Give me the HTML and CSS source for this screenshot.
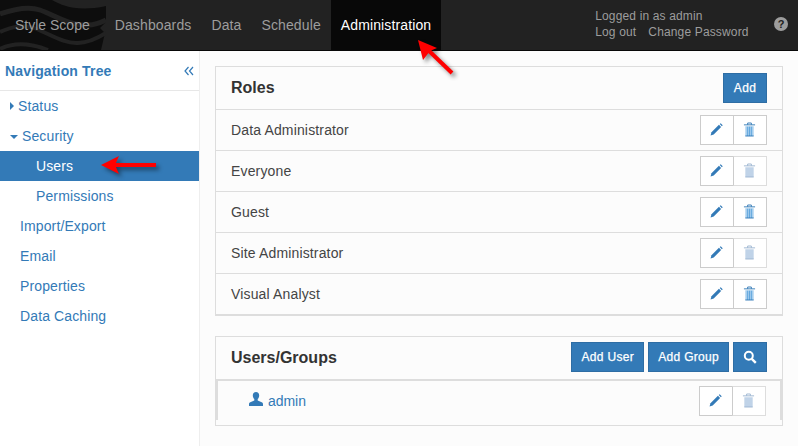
FILE: index.html
```html
<!DOCTYPE html>
<html lang="en">
<head>
    <meta charset="UTF-8">
    <title>Style Scope Administration</title>
    <link rel="stylesheet" href="styles.css">
</head>
<body>
    <svg width="0" height="0" class="defs">
        <symbol id="pencil" viewBox="0 0 14 14">
            <path d="M.6 13.400l1-3.400L9.600 2l2.400 2.400-8 8z" fill="#337ab7"/>
            <path d="M10.500 1.200l1-.9 2.200 2.200-.9 1z" fill="#337ab7"/>
        </symbol>
        <symbol id="trash" viewBox="0 0 14 16">
            <path d="M1 3h12M5 3V1h4v2" fill="none" stroke="#337ab7" stroke-width="1"/>
            <path d="M2.500 4.500h9V15h-9z" fill="#a8cfee"/>
            <path d="M5 5v10M7 5v10M9 5v10" stroke="#5da4dc" stroke-width="1"/>
            <path d="M2.500 15h9" stroke="#337ab7" stroke-width="1"/>
        </symbol>
        <symbol id="trash-off" viewBox="0 0 14 16">
            <path d="M1 3h12M5 3V1h4v2" fill="none" stroke="#9cb4d0" stroke-width="1"/>
            <path d="M2.500 4.500h9V15h-9z" fill="#c0d3e8"/>
            <path d="M2.500 15h9" stroke="#9cb4d0" stroke-width="1"/>
        </symbol>
    </svg>

    <header class="topbar">
        <svg class="swirl" viewBox="0 0 106 50" width="106" height="50">
            <path d="M0 0h106v22l-6 6 5 5-4 17H0z" fill="#0d0d0d"/>
            <path d="M0 14C14 9 28 6 40 10c14 5 30 16 48 15 6 0 12-2 18-5" fill="none" stroke="#222" stroke-width="5"/>
            <path d="M0 32c12-5 22-8 34-4 16 6 30 16 44 15 10 0 20-5 28-10" fill="none" stroke="#222" stroke-width="4"/>
            <path d="M0 49c14-7 30-6 48 1" fill="none" stroke="#222" stroke-width="4"/>
            <path d="M52 0c10 6 26 12 54 6V0z" fill="#222"/>
        </svg>
        <nav class="topnav">
            <a href="#" class="brand">Style Scope</a>
            <a href="#">Dashboards</a>
            <a href="#">Data</a>
            <a href="#">Schedule</a>
            <a href="#" class="active">Administration</a>
        </nav>
        <div class="account">
            <div>Logged in as admin</div>
            <div class="account-links"><a href="#">Log out</a><a href="#">Change Password</a></div>
        </div>
        <span class="help">?</span>
    </header>

    <div class="content">
        <aside class="sidebar">
            <div class="tree-title">
                <span>Navigation Tree</span>
                <svg width="10" height="10" viewBox="0 0 10 10"><path d="M4.500 1L1 5l3.500 4M9 1L5.500 5 9 9" fill="none" stroke="#337ab7" stroke-width="1.200"/></svg>
            </div>
            <ul class="tree">
                <li class="lvl1"><span class="caret-right"></span>Status</li>
                <li class="lvl1"><span class="caret-down"></span>Security</li>
                <li class="lvl2 selected">Users</li>
                <li class="lvl2">Permissions</li>
                <li class="lvl0">Import/Export</li>
                <li class="lvl0">Email</li>
                <li class="lvl0">Properties</li>
                <li class="lvl0">Data Caching</li>
            </ul>
        </aside>

        <main class="main">
            <section class="panel">
                <div class="panel-head">
                    <h2>Roles</h2>
                    <div class="actions"><button class="btn">Add</button></div>
                </div>
                <div class="row"><span>Data Administrator</span><div class="tools"><button><svg class="ic-pencil"><use href="#pencil"/></svg></button><button><svg class="ic-trash"><use href="#trash"/></svg></button></div></div>
                <div class="row"><span>Everyone</span><div class="tools"><button><svg class="ic-pencil"><use href="#pencil"/></svg></button><button class="off"><svg class="ic-trash"><use href="#trash-off"/></svg></button></div></div>
                <div class="row"><span>Guest</span><div class="tools"><button><svg class="ic-pencil"><use href="#pencil"/></svg></button><button><svg class="ic-trash"><use href="#trash"/></svg></button></div></div>
                <div class="row"><span>Site Administrator</span><div class="tools"><button><svg class="ic-pencil"><use href="#pencil"/></svg></button><button class="off"><svg class="ic-trash"><use href="#trash-off"/></svg></button></div></div>
                <div class="row"><span>Visual Analyst</span><div class="tools"><button><svg class="ic-pencil"><use href="#pencil"/></svg></button><button><svg class="ic-trash"><use href="#trash"/></svg></button></div></div>
            </section>

            <section class="panel users">
                <div class="panel-head">
                    <h2>Users/Groups</h2>
                    <div class="actions">
                        <button class="btn btn-user">Add User</button>
                        <button class="btn">Add Group</button>
                        <button class="btn btn-icon"><svg width="14" height="14" viewBox="0 0 14 14"><circle cx="5.800" cy="5.800" r="4" fill="none" stroke="#fff" stroke-width="2"/><path d="M8.800 8.800l4 4" stroke="#fff" stroke-width="2.400"/></svg></button>
                    </div>
                </div>
                <div class="user-row">
                    <a href="#" class="user-link">
                        <svg width="14" height="14" viewBox="0 0 14 14"><path d="M7 0c2 0 3.200 1.500 3.200 3.500 0 1.500-.7 2.800-1.500 3.600v1.300l4 1.800c.8.400 1.300 1 1.300 1.800V14H0v-2c0-.8.500-1.400 1.300-1.800l4-1.800V7.100C4.500 6.300 3.800 5 3.800 3.500 3.800 1.500 5 0 7 0z" fill="#337ab7"/></svg>
                        admin
                    </a>
                    <div class="tools"><button><svg class="ic-pencil"><use href="#pencil"/></svg></button><button class="off"><svg class="ic-trash"><use href="#trash-off"/></svg></button></div>
                </div>
            </section>
        </main>
    </div>

    <!-- annotation arrows drawn over the screenshot -->
    <svg class="arrow arrow-top" width="50" height="50" viewBox="0 0 50 50">
        <path d="M36 33L10 8" stroke="#f00" stroke-width="4"/>
        <path d="M2 0l19 8-7 3-7 9z" fill="#f00"/>
    </svg>
    <svg class="arrow arrow-side" width="64" height="28" viewBox="0 0 64 28">
        <path d="M14 11h41" stroke="#f00" stroke-width="4"/>
        <path d="M0 11L18 2l-4 9 4 9z" fill="#f00"/>
    </svg>
</body>
</html>
```

FILE: styles.css
```css
* {
    box-sizing: border-box;
}

body {
    margin: 0;
    height: 446px;
    overflow: hidden;
    font-family: "Liberation Sans", Arial, sans-serif;
    font-size: 14px;
    color: #444;
    background-color: #fcfcfc;
}

.defs {
    position: absolute;
}

a {
    text-decoration: none;
}

.topbar {
    position: relative;
    display: flex;
    height: 51px;
    background-color: #222;
    border-bottom: 1px solid #080808;
}

.swirl {
    position: absolute;
    left: 0;
    top: 0;
}

.topnav {
    position: relative;
    display: flex;
    padding-left: 5px;
    letter-spacing: .12px;
}

.topnav a {
    padding: 0 10px;
    line-height: 50px;
    color: #9d9d9d;
}

.topnav a.brand {
    padding-right: 15px;
    letter-spacing: 0;
}

.topnav a.active {
    color: #fff;
    background-color: #080808;
}

.account {
    position: relative;
    margin-left: 154px;
    padding-top: 8px;
    font-size: 12px;
    line-height: 16px;
    color: #9d9d9d;
    letter-spacing: .15px;
}

.account-links a {
    margin-right: 12px;
    color: #9d9d9d;
}

.help {
    width: 14px;
    height: 14px;
    margin: 17px 10px 0 auto;
    border-radius: 50%;
    background-color: #9d9d9d;
    color: #222;
    font-size: 11px;
    font-weight: bold;
    line-height: 14px;
    text-align: center;
}

.content {
    display: flex;
    height: 395px;
}

.sidebar {
    width: 200px;
    flex: none;
    background-color: #fff;
    border-right: 1px solid #eee;
}

.tree-title {
    display: flex;
    justify-content: space-between;
    align-items: center;
    height: 40px;
    padding: 0 5px;
    border-bottom: 1px solid #e7e7e7;
    color: #337ab7;
    font-weight: bold;
    letter-spacing: .15px;
}

.tree {
    list-style: none;
    margin: 0;
    padding: 0;
    letter-spacing: .12px;
}

.tree li {
    height: 30px;
    line-height: 30px;
    color: #337ab7;
}

.lvl0 {
    padding-left: 20px;
}

.lvl1 {
    padding-left: 10px;
}

.lvl2 {
    padding-left: 36px;
}

.tree li.selected {
    background-color: #337ab7;
    color: #fff;
}

.caret-right,
.caret-down {
    display: inline-block;
    width: 0;
    height: 0;
    vertical-align: 1px;
}

.caret-right {
    margin-right: 4px;
    border-left: 4px solid #337ab7;
    border-top: 4px solid transparent;
    border-bottom: 4px solid transparent;
}

.caret-down {
    margin-right: 4px;
    border-top: 4px solid #337ab7;
    border-left: 4px solid transparent;
    border-right: 4px solid transparent;
    vertical-align: 2px;
    width: 7px;
}

.main {
    flex: 1;
    padding: 15px 15px 0;
}

.panel {
    border: 1px solid #ddd;
}

.panel.users {
    margin-top: 20px;
    height: 90px;
}

.panel-head {
    display: flex;
    justify-content: space-between;
    align-items: center;
    height: 43px;
    padding: 0 15px;
    border-bottom: 1px solid #ddd;
}

.users .panel-head {
    height: 44px;
    border-bottom-width: 2px;
}

.users .actions {
    margin-bottom: 2px;
}

h2 {
    margin: 0;
    font-size: 16px;
    font-weight: bold;
    color: #333;
}

.actions {
    display: flex;
    gap: 4px;
}

.btn {
    min-width: 44px;
    height: 30px;
    padding: 0 9px;
    background-color: #337ab7;
    border: 1px solid #2e6da4;
    color: #fff;
    font-family: inherit;
    font-size: 12px;
    font-weight: normal;
    letter-spacing: .3px;
    -webkit-text-stroke: .25px #fff;
}

.btn-user {
    min-width: 73px;
}

.btn-icon {
    min-width: 34px;
    width: 34px;
    padding: 0;
    line-height: 0;
}

.row {
    display: flex;
    justify-content: space-between;
    align-items: center;
    height: 41px;
    padding: 0 15px;
    border-bottom: 1px solid #ddd;
    letter-spacing: .15px;
}

.tools {
    display: flex;
}

.tools button {
    display: flex;
    align-items: center;
    justify-content: center;
    width: 34px;
    height: 30px;
    margin-left: -1px;
    padding: 0 1px 1px 0;
    background-color: #fff;
    border: 1px solid #ccc;
}

.tools button.off {
    border-color: #ddd;
    border-left-color: #ccc;
}

.ic-pencil {
    width: 13px;
    height: 13px;
}

.ic-trash {
    width: 13px;
    height: 15px;
}

.user-row {
    display: flex;
    justify-content: space-between;
    align-items: center;
    height: 39px;
    padding: 0 14px 0 31px;
    border-left: 2px solid #ddd;
    border-right: 2px solid #ddd;
}

.user-link {
    color: #337ab7;
    word-spacing: 1px;
}

.arrow {
    position: absolute;
    filter: drop-shadow(3px 3px 2px rgba(0, 0, 0, .45));
}

.arrow-top {
    left: 416px;
    top: 40px;
}

.arrow-side {
    left: 101px;
    top: 154px;
}
```
